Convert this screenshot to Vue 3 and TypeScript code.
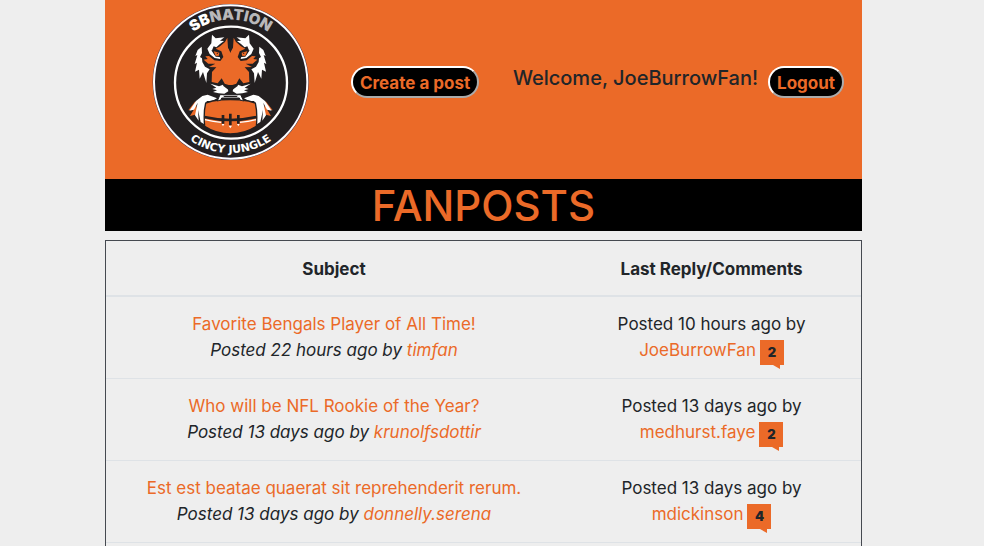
<script setup lang="ts">
interface Post {
  id: number
  subject: string
  posted: string
  author: string
  replied: string
  replier: string
  comments: number
}

const user = 'JoeBurrowFan'

const posts: Post[] = [
  {
    id: 1,
    subject: 'Favorite Bengals Player of All Time!',
    posted: '22 hours ago',
    author: 'timfan',
    replied: '10 hours ago',
    replier: 'JoeBurrowFan',
    comments: 2,
  },
  {
    id: 2,
    subject: 'Who will be NFL Rookie of the Year?',
    posted: '13 days ago',
    author: 'krunolfsdottir',
    replied: '13 days ago',
    replier: 'medhurst.faye',
    comments: 2,
  },
  {
    id: 3,
    subject: 'Est est beatae quaerat sit reprehenderit rerum.',
    posted: '13 days ago',
    author: 'donnelly.serena',
    replied: '13 days ago',
    replier: 'mdickinson',
    comments: 4,
  },
]
</script>

<template>
  <div class="page">
    <main class="container">
      <header class="masthead">
        <a class="logo" href="#" aria-label="Cincy Jungle home">
          <svg viewBox="0 0 486 492" role="img" aria-hidden="true">
            <defs>
              <path id="arc-top" d="M55 246 A187 187 0 0 1 429 246" />
              <path id="arc-bottom" d="M29 246 A213 213 0 0 0 455 246" />
              <g id="half-face">
                <!-- ear tuft and brow -->
                <path fill="#fff" d="M124 70 L126 44 L137 55 L163 52 L150 62 L162 63 L150 72 L139 82 L131 79 L126 91 L134 104 L149 110 L151 117 L134 114 L119 102 L112 86 Z" />
                <!-- outer fur -->
                <path fill="#fff" d="M95 80 L83 90 L76 108 L82 105 L74 132 L81 128 L75 155 L87 149 L89 176 L99 156 L109 189 L111 160 L119 148 L105 140 L97 126 L96 115 L90 111 L96 99 Z" />
                <!-- forehead, cheek and muzzle -->
                <path fill="#eb6a28" d="M172 53 L165 66 L150 79 L137 86 L154 94 L160 111 L151 123 L133 121 L117 108 L106 109 L113 117 L101 119 L115 131 L136 131 L117 141 L139 142 L126 156 L125 186 L143 190 L155 175 L164 191 L176 195 L183 195 L183 98 L174 83 Z" />
                <!-- eye -->
                <path fill="#231f20" d="M124 91 L137 91 L153 98 L151 111 L137 110 Z" />
                <path fill="#eb6a28" d="M131 94 L148 98 L147 107 L137 108 Z" />
                <circle cx="142" cy="100" r="2" fill="#231f20" />
                <!-- whisker pad -->
                <path fill="#fff" d="M121 191 L147 199 L159 194 L173 204 L175 214 L163 221 L146 220 L129 216 L141 211 L127 207 L139 203 Z" />
                <path fill="#231f20" d="M158 187 L166 195 L178 198 L183 200 L183 217 L176 210 L160 198 Z" />
              </g>
              <g id="half-arm">
                <path fill="#eb6a28" d="M76 244 L55 271 L73 266 L60 288 L84 282 Z" />
                <path fill="#fff" d="M113 224 L141 235 L126 243 L110 243 L103 313 L92 306 L84 270 L86 302 L75 286 L83 248 L72 269 L58 272 L78 243 L97 228 Z" />
              </g>
            </defs>
            <circle cx="242" cy="246" r="230" fill="#231f20" stroke="#302541" stroke-width="8" />
            <circle cx="242" cy="246" r="230" fill="none" stroke="#fff" stroke-width="6" />
            <circle cx="243" cy="248" r="168" fill="#231f20" stroke="#fff" stroke-width="7" />
            <g transform="translate(60 60)">
              <use href="#half-face" />
              <use href="#half-face" transform="translate(363 0) scale(-1 1)" />
              <path fill="#231f20" d="M181 53 L188 67 L186 84 L181 99 L176 84 L174 67 Z" />
              <use href="#half-arm" />
              <use href="#half-arm" transform="translate(363 0) scale(-1 1)" />
              <!-- football -->
              <path fill="#eb6a28" stroke="#231f20" stroke-width="4" d="M127 243 Q181 235 236 243 L256 249 Q263 280 259 319 Q223 342 181 342 Q139 342 104 319 Q100 279 107 249 Z" />
              <path fill="none" stroke="#231f20" stroke-width="8" d="M103 291 Q181 309 260 291" />
              <path fill="none" stroke="#fff" stroke-width="4" d="M105 299 Q130 306 154 307 M209 307 Q235 306 258 299" />
              <path fill="none" stroke="#231f20" stroke-width="8" d="M159 285 V311 M181 281 V316 M205 285 V311" />
              <path fill="#fff" d="M155 312 h8 l-4 7 z M176 317 h10 l-5 8 z M201 312 h8 l-4 7 z" />
              <!-- jaw -->
              <path fill="#fff" stroke="#231f20" stroke-width="3" d="M142 243 L150 224 L212 224 L221 243 L210 240 L208 234 L155 234 L153 240 Z" />
              <path fill="#231f20" d="M159 227 h45 l-4 4 h-37 z" />
            </g>
            <text class="ring-title" text-anchor="middle">
              <textPath href="#arc-top" startOffset="50%"><tspan fill="#fff">SB</tspan><tspan fill="#b9b8ba">NATION</tspan></textPath>
            </text>
            <text class="ring-name" text-anchor="middle">
              <textPath href="#arc-bottom" startOffset="50%">CINCY JUNGLE</textPath>
            </text>
          </svg>
        </a>
        <button class="pill" type="button">Create a post</button>
        <div class="session">
          <span class="welcome">Welcome, {{ user }}!</span>
          <button class="pill" type="button">Logout</button>
        </div>
      </header>

      <h1 class="title">FANPOSTS</h1>

      <div class="board">
        <table class="posts">
          <thead>
            <tr>
              <th class="subject" scope="col">Subject</th>
              <th scope="col">Last Reply/Comments</th>
            </tr>
          </thead>
          <tbody>
            <tr v-for="post in posts" :key="post.id">
              <td>
                <a href="#">{{ post.subject }}</a>
                <div class="byline">Posted {{ post.posted }} by <a href="#">{{ post.author }}</a></div>
              </td>
              <td>
                <div>Posted {{ post.replied }} by</div>
                <div class="reply">
                  <a href="#">{{ post.replier }}</a>
                  <span class="count">{{ post.comments }}</span>
                </div>
              </td>
            </tr>
          </tbody>
        </table>
      </div>
    </main>
  </div>
</template>

<style>
body {
  background: #eee;
}
</style>

<style scoped>
.page {
  padding-right: 17px;
  color: #212529;
  font: 17px/26px Inter, 'Liberation Sans', sans-serif;
}

.container {
  width: 78.3%;
  margin: 0 auto;
}

a {
  color: #eb6a28;
  text-decoration: none;
}

.masthead {
  display: flex;
  align-items: flex-start;
  padding: 0 18px 15px 45px;
  background: #eb6a28;
}

.logo {
  width: 162px;
  margin-right: 39px;
}

.logo svg {
  display: block;
  width: 100%;
}

.ring-title {
  font: 900 45px Inter, sans-serif;
}

.ring-name {
  fill: #fff;
  font: 700 33px 'DejaVu Sans', sans-serif;
}

.pill {
  margin-top: 66px;
  padding: 2px 7px 0;
  border: 2px outset #fff;
  border-radius: 16px;
  background: #000;
  color: #eb6a28;
  font: 700 17px/26px Inter, 'Liberation Sans', sans-serif;
}

.session {
  display: flex;
  gap: 10px;
  margin-left: auto;
}

.welcome {
  margin-top: 65px;
  font-size: 20px;
  font-weight: 500;
}

.title {
  margin: 0 0 9px;
  padding-top: 2px;
  background: #000;
  color: #eb6a28;
  font-size: 42px;
  font-weight: 500;
  line-height: 50px;
  text-align: center;
}

.board {
  padding-bottom: 16px;
  border: 1px solid #454950;
}

.posts {
  width: 100%;
  border-spacing: 0;
  text-align: center;
}

.posts th {
  padding: 15px 12px 13px;
  border-bottom: 2px solid #dee2e6;
  font-weight: 700;
}

.posts td {
  padding: 14px 12px 15px;
  border-bottom: 1px solid #dee2e6;
}

.posts .subject {
  box-sizing: border-box;
  width: 60.4%;
}

.byline {
  font-style: italic;
}

.reply {
  display: flex;
  justify-content: center;
  gap: 4px;
}

.count {
  position: relative;
  width: 24px;
  height: 25px;
  margin-top: 3px;
  margin-bottom: -2px;
  background: #eb6a28;
  color: #212529;
  font-size: 13px;
  font-weight: 900;
  line-height: 24px;
}

.count::after {
  position: absolute;
  top: 100%;
  right: 4px;
  border-top: 4px solid #eb6a28;
  border-left: 7px solid transparent;
  content: '';
}
</style>
